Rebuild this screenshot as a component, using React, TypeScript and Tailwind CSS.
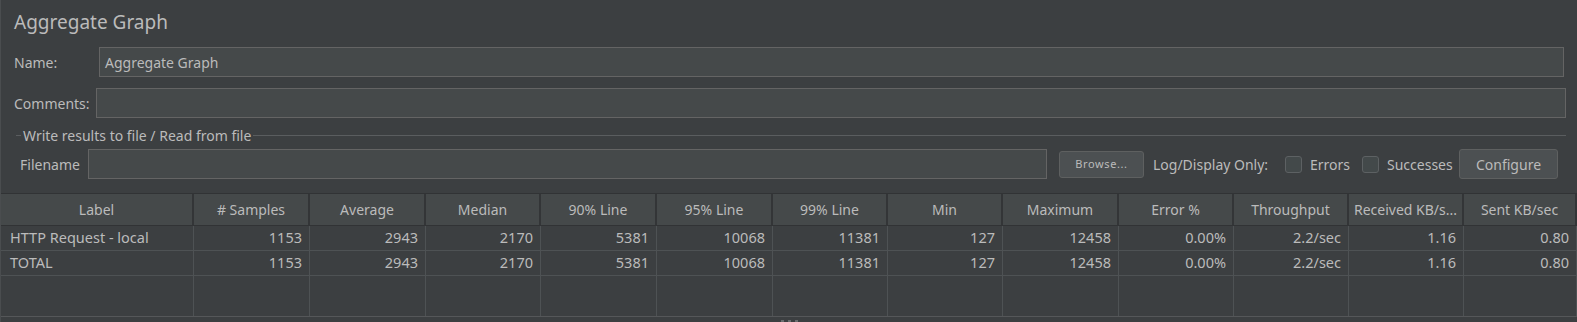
import React from "react";

const columns = [
  "Label",
  "# Samples",
  "Average",
  "Median",
  "90% Line",
  "95% Line",
  "99% Line",
  "Min",
  "Maximum",
  "Error %",
  "Throughput",
  "Received KB/s...",
  "Sent KB/sec",
];

const rows = [
  ["HTTP Request - local", "1153", "2943", "2170", "5381", "10068", "11381", "127", "12458", "0.00%", "2.2/sec", "1.16", "0.80"],
  ["TOTAL", "1153", "2943", "2170", "5381", "10068", "11381", "127", "12458", "0.00%", "2.2/sec", "1.16", "0.80"],
];

// column widths as measured from the Swing table
const gridCols =
  "grid grid-cols-[193px_116px_116px_115px_116px_116px_115px_115px_116px_115px_115px_115px_minmax(0,1fr)]";

function Checkbox({ label, width }: { label: string; width: string }) {
  return (
    <div className={`flex items-center shrink-0 ${width}`}>
      <div className="w-[17px] h-[17px] shrink-0 rounded-[3px] border border-[#5d6163] bg-[#43494a]" />
      <span className="ml-[8px] whitespace-nowrap">{label}</span>
    </div>
  );
}

export default function App() {
  return (
    <div
      className="w-[1577px] h-[322px] overflow-hidden bg-[#3c3f41] border-l border-[#4a4d4f] text-[#bbbbbb] text-[14px] flex flex-col"
      style={{ fontFamily: '"Noto Sans", "Open Sans", sans-serif' }}
    >
      {/* title */}
      <div className="h-[44px] flex items-center pl-[13px] text-[19px] leading-none">Aggregate Graph</div>

      {/* name */}
      <div className="mt-[3px] h-[30px] flex items-center pl-[13px] pr-[13px]">
        <span className="w-[85px] shrink-0">Name:</span>
        <div className="flex-1 h-full bg-[#45494a] border border-[#646464] flex items-center px-[5px]">Aggregate Graph</div>
      </div>

      {/* comments */}
      <div className="mt-[11px] h-[30px] flex items-center pl-[13px] pr-[11px]">
        <span className="w-[82px] shrink-0">Comments:</span>
        <div className="flex-1 h-full bg-[#45494a] border border-[#646464]" />
      </div>

      {/* file group title */}
      <div className="mt-[9px] h-[17px] flex items-center pl-[15px] pr-[11px]">
        <div className="w-[5px] h-px bg-[#5a5d5f]" />
        <span className="px-[2px] leading-none">Write results to file / Read from file</span>
        <div className="flex-1 h-px bg-[#5a5d5f]" />
      </div>

      {/* filename row */}
      <div className="mt-[5px] h-[30px] flex items-center pl-[19px]">
        <span className="w-[68px] shrink-0">Filename</span>
        <div className="w-[959px] shrink-0 h-full bg-[#45494a] border border-[#646464]" />
        <button className="ml-[12px] w-[85px] shrink-0 h-[27px] rounded-[3px] border border-[#5e6060] bg-[#4c5052] text-[11px] tracking-[0.6px] text-[#bbbbbb]">
          Browse...
        </button>
        <span className="ml-[9px] w-[118px] shrink-0 whitespace-nowrap">Log/Display Only:</span>
        <div className="ml-[14px]">
          <Checkbox label="Errors" width="w-[62px]" />
        </div>
        <div className="ml-[15px]">
          <Checkbox label="Successes" width="w-[87px]" />
        </div>
        <button className="ml-[10px] w-[99px] shrink-0 h-[30px] rounded-[3px] border border-[#5e6060] bg-[#4c5052] text-[14px] text-[#bbbbbb]">
          Configure
        </button>
      </div>

      {/* table */}
      <div className="mt-[14px] flex-1 flex flex-col border-t border-[#313335]">
        <div className={`${gridCols} h-[32px] bg-[#45494a] border-b border-[#313335]`}>
          {columns.map((c) => (
            <div key={c} className="flex items-center justify-center border-r-2 border-[#333537] whitespace-nowrap overflow-hidden">
              {c}
            </div>
          ))}
        </div>
        {rows.map((r, i) => (
          <div key={i} className={`${gridCols} h-[25px] border-b border-[#4e5254] text-[14.5px]`}>
            {r.map((v, j) => (
              <div
                key={j}
                className={
                  j === 0
                    ? "flex items-center pl-[9px] border-r border-[#4e5254] whitespace-nowrap"
                    : "flex items-center justify-end pr-[7px] border-r border-[#4e5254] whitespace-nowrap"
                }
              >
                {v}
              </div>
            ))}
          </div>
        ))}
        <div className={`${gridCols} h-[40px]`}>
          {columns.map((c) => (
            <div key={c} className="border-r border-[#4e5254]" />
          ))}
        </div>
        <div className="h-px bg-[#555759]" />
        <div className="flex-1 flex justify-center items-end gap-[4px]">
          <div className="w-[3px] h-[2px] bg-[#6a6d6f]" />
          <div className="w-[3px] h-[2px] bg-[#6a6d6f]" />
          <div className="w-[3px] h-[2px] bg-[#6a6d6f]" />
        </div>
      </div>
    </div>
  );
}
